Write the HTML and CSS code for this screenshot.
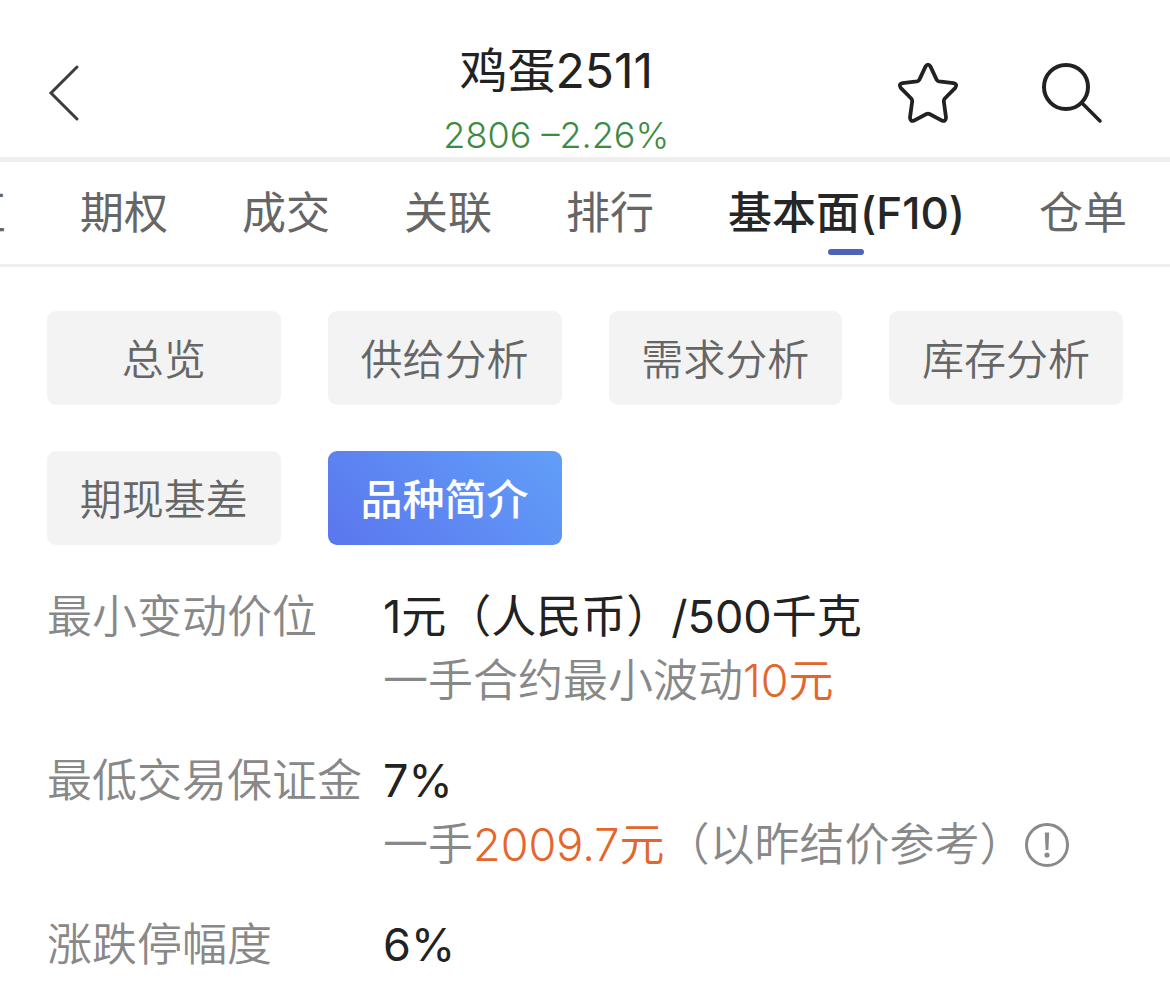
FILE: index.html
```html
<!DOCTYPE html>
<html lang="zh-CN">
<head>
	<meta charset="UTF-8">
	<meta name="viewport" content="width=device-width">
	<title>鸡蛋2511</title>
	<link rel="stylesheet" href="styles.css">
</head>
<body>
	<header class="header">
		<button class="icon-btn back" type="button" aria-label="返回">
			<svg width="32" height="58" viewBox="0 0 32 58" fill="none" stroke="#3c3c3c" stroke-width="3" stroke-linecap="round">
				<path d="M29 3L3 29L29 55"/>
			</svg>
		</button>
		<div class="quote">
			<h1>鸡蛋2511</h1>
			<p>2806 –2.26%</p>
		</div>
		<div class="actions">
			<button class="icon-btn" type="button" aria-label="收藏">
				<svg width="64" height="64" viewBox="0 0 64 64" fill="none" stroke="#222" stroke-width="3.800" stroke-linejoin="round">
					<path d="M29.600 5.400Q32 1.800 34.400 5.400L40.600 18.600Q41.300 20 43 20.300L57.500 22.200Q61.800 23 59.300 26.800L48.800 37.500Q47.700 38.800 47.800 40.300L50 56.500Q49.800 60.800 46 59.600L33.500 53Q32 52.300 30.500 53L18 59.600Q14.200 60.800 14 56.500L16.200 40.300Q16.300 38.800 15.200 37.500L4.700 26.800Q2.200 23 6.500 22.200L21 20.300Q22.700 20 23.400 18.600Z"/>
				</svg>
			</button>
			<button class="icon-btn" type="button" aria-label="搜索">
				<svg width="64" height="64" viewBox="0 0 64 64" fill="none" stroke="#222" stroke-width="4" stroke-linecap="round">
					<circle cx="26" cy="26" r="22"/>
					<path d="M43 43L60 60" stroke-width="3.500"/>
				</svg>
			</button>
		</div>
	</header>

	<nav class="tabs">
		<a href="#">区</a>
		<a href="#">期权</a>
		<a href="#">成交</a>
		<a href="#">关联</a>
		<a href="#">排行</a>
		<a href="#" class="active">基本面(F10)</a>
		<a href="#">仓单</a>
	</nav>

	<main>
		<div class="chips">
			<button type="button">总览</button>
			<button type="button">供给分析</button>
			<button type="button">需求分析</button>
			<button type="button">库存分析</button>
			<button type="button">期现基差</button>
			<button type="button" class="active">品种简介</button>
		</div>

		<dl class="info">
			<dt>最小变动价位</dt>
			<dd>
				<p>1元（人民币）/500千克</p>
				<p class="sub">一手合约最小波动<em>10元</em></p>
			</dd>
			<dt>最低交易保证金</dt>
			<dd>
				<p>7%</p>
				<p class="sub">一手<em>2009.7元</em>（以昨结价参考）
					<button class="icon-btn" type="button" aria-label="说明">
						<svg width="46" height="46" viewBox="0 0 46 46" fill="none" stroke="#8a8a8a" stroke-width="3">
							<circle cx="23" cy="23" r="20.500"/>
							<path d="M20.800 10.500H25.200L24.400 28H21.600Z" fill="#8a8a8a" stroke="none"/>
							<circle cx="23" cy="33" r="2.600" fill="#8a8a8a" stroke="none"/>
						</svg>
					</button>
				</p>
			</dd>
			<dt>涨跌停幅度</dt>
			<dd>
				<p>6%</p>
			</dd>
		</dl>
	</main>
</body>
</html>
```
FILE: styles.css
```css
* {
	box-sizing: border-box;
}
body {
	margin: 0;
	background: #fff;
	color: #222;
	font-family: Inter, "Noto Sans CJK SC", sans-serif;
	overflow-x: hidden;
}
h1, p, dl, dd {
	margin: 0;
}
button {
	padding: 0;
	border: 0;
	background: none;
	font-family: inherit;
	cursor: pointer;
}
a {
	color: inherit;
	text-decoration: none;
}
.icon-btn svg {
	display: block;
}

/* header */
.header {
	display: grid;
	grid-template-columns: 10fr auto 11fr;
	align-items: center;
	padding: 29px 66px 0 48px;
	border-bottom: 5px solid #eee;
}
.back {
	justify-self: start;
}
.quote {
	text-align: center;
}
.quote h1 {
	font-size: 48px;
	font-weight: 400;
	line-height: 84px;
}
.quote p {
	color: #3d8b41;
	font-size: 36px;
	font-weight: 350;
	line-height: 44px;
}
.actions {
	display: flex;
	justify-content: flex-end;
	gap: 80px;
}

/* tabs */
.tabs {
	display: flex;
	gap: 74px;
	margin-left: -38px;
	border-bottom: 3px solid #eee;
	color: #666;
	font-size: 44px;
	line-height: 102px;
	white-space: nowrap;
}
.tabs a {
	position: relative;
}
.tabs .active {
	color: #262626;
	font-weight: 500;
}
.tabs .active::after {
	position: absolute;
	left: 50%;
	bottom: 9px;
	width: 36px;
	height: 6px;
	margin-left: -19px;
	border-radius: 3px;
	background: #4d63b8;
	content: "";
}

/* chips */
.chips {
	display: grid;
	grid-template-columns: repeat(4, 1fr);
	gap: 46px 47px;
	padding: 44px 47px 0;
}
.chips button {
	height: 94px;
	padding-bottom: 4px;
	border-radius: 9px;
	background: #f3f3f3;
	color: #666;
	font-size: 42px;
	font-weight: 350;
}
.chips .active {
	background: linear-gradient(45deg, #5b76ee, #619ff8);
	color: #fff;
	font-weight: 500;
}

/* info */
.info {
	display: grid;
	grid-template-columns: 336px 1fr;
	row-gap: 36px;
	padding: 40px 47px 0;
	font-size: 45px;
	line-height: 64px;
	white-space: nowrap;
}
.info dt, .sub {
	color: #888;
	font-weight: 350;
}
.sub {
	display: flex;
	align-items: center;
}
.sub em {
	color: #e4662c;
	font-style: normal;
}
```
